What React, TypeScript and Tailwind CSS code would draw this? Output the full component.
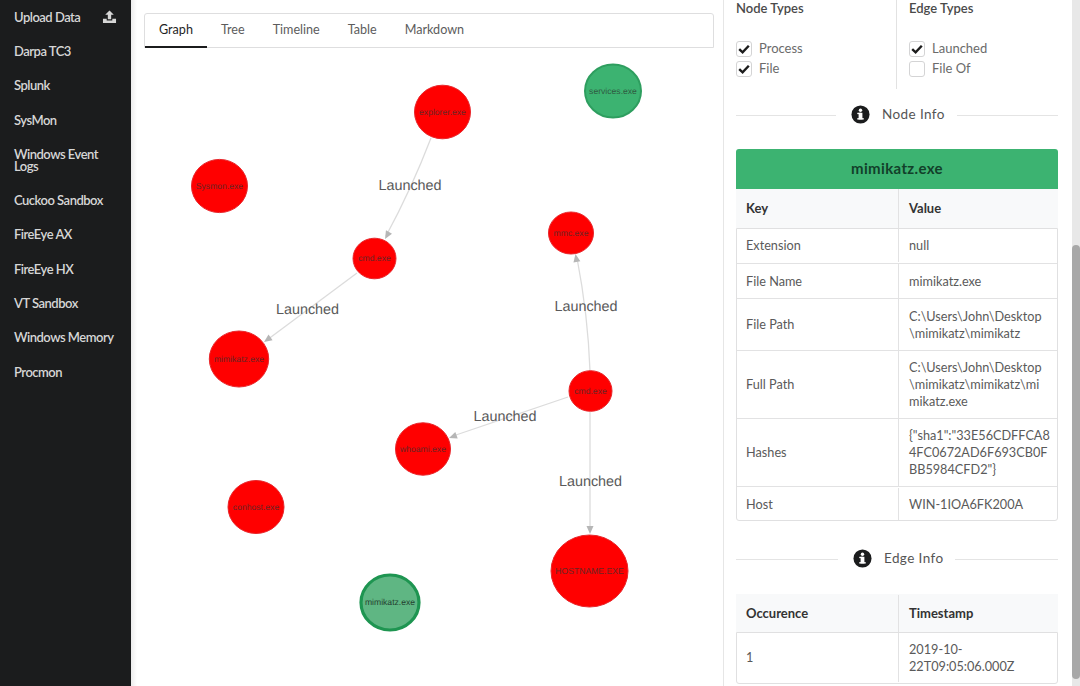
const nav = ["Upload Data", "Darpa TC3", "Splunk", "SysMon", "Windows Event Logs", "Cuckoo Sandbox", "FireEye AX", "FireEye HX", "VT Sandbox", "Windows Memory", "Procmon"];
const tabs = ["Graph", "Tree", "Timeline", "Table", "Markdown"];
const nodes = [
  { x: 442.5, y: 112, rx: 28, ry: 26.8, l: "explorer.exe" },
  { x: 219.5, y: 186, rx: 28, ry: 26.6, l: "Sysmon.exe" },
  { x: 374.5, y: 258.5, rx: 21.5, ry: 20.3, l: "cmd.exe" },
  { x: 571, y: 233, rx: 22.5, ry: 21, l: "mmc.exe" },
  { x: 239, y: 359, rx: 29.7, ry: 28, l: "mimikatz.exe" },
  { x: 590.5, y: 391, rx: 21.5, ry: 20.3, l: "cmd.exe" },
  { x: 423, y: 449, rx: 27.5, ry: 26.2, l: "whoami.exe" },
  { x: 256, y: 507, rx: 28, ry: 26.5, l: "conhost.exe" },
  { x: 589.5, y: 571, rx: 38.5, ry: 36, l: "HOSTNAME.EXE" },
];
const edges = [
  { d: "M431 138 Q411 190 386 236", a: [385, 239, -60], tx: 410, ty: 190 },
  { d: "M357 273 L267 340", a: [264, 342, -35], tx: 307.5, ty: 314 },
  { d: "M590 371 Q588 315 577 258", a: [575.5, 254, 80], tx: 586, ty: 311 },
  { d: "M568 397 L453 436", a: [449, 438, -20], tx: 505, ty: 421 },
  { d: "M590 412 L590 530", a: [590, 534, -90], tx: 590.5, ty: 486 },
];

function Check({ on, label }: { on: boolean; label: string }) {
  return (
    <div className="flex items-center h-5 text-[13px] text-[#6b6b6b]">
      <span className="w-[16px] h-[16px] rounded-[3px] border border-[#d4d4d5] flex items-center justify-center mr-[7px] bg-white">
        {on && (
          <svg viewBox="0 0 12 12" className="w-[12px] h-[12px]">
            <path d="M1.2 6.2 L4.6 9.4 L10.8 2.8" fill="none" stroke="#1c1c1c" strokeWidth="2.4" />
          </svg>
        )}
      </span>
      {label}
    </div>
  );
}

function Divider({ label, l }: { label: string; l: string }) {
  return (
    <div className="flex items-center h-6">
      <div className={`h-px bg-[#e4e4e4] mt-[3px] ${l}`} />
      <svg viewBox="0 0 20 20" className="w-[19px] h-[19px] ml-[15px] mr-[12px] shrink-0">
        <circle cx="10" cy="10" r="9.5" fill="#1b1c1d" />
        <rect x="8" y="8.2" width="4" height="7" fill="#fff" />
        <rect x="6.6" y="8.2" width="4" height="1.4" fill="#fff" />
        <rect x="6.6" y="13.8" width="6.8" height="1.5" fill="#fff" />
        <circle cx="10" cy="5.6" r="1.8" fill="#fff" />
      </svg>
      <span className="text-[13.5px] tracking-[0.4px] text-[#555] whitespace-nowrap">{label}</span>
      <div className="h-px bg-[#e4e4e4] flex-1 ml-[12px] mt-[3px]" />
    </div>
  );
}

function Row({ k, v, h, top = true }: { k: string; v: string[]; h: string; top?: boolean }) {
  return (
    <div className={`flex text-[12.7px] leading-[17px] text-[#5a5a5a] ${top ? "border-t border-[#e2e2e3]" : ""} ${h}`}>
      <div className="w-[162px] shrink-0 border-r border-[#e2e2e3] pl-[9px] flex items-center">{k}</div>
      <div className="pl-[10px] flex flex-col justify-center whitespace-nowrap">
        {v.map((t) => <span key={t}>{t}</span>)}
      </div>
    </div>
  );
}

function Head({ a, b, h }: { a: string; b: string; h: string }) {
  return (
    <div className={`flex bg-[#f8f9fa] text-[13px] font-bold text-[#333] ${h}`}>
      <div className="w-[163px] shrink-0 border-r border-[#e2e2e3] pl-[10px] flex items-center">{a}</div>
      <div className="pl-[10px] flex items-center">{b}</div>
    </div>
  );
}

export default function App() {
  return (
    <div className="flex h-[686px] w-[1080px] overflow-hidden bg-white font-['Lato','Liberation_Sans',sans-serif]">
      <aside className="w-[131px] shrink-0 bg-[#1b1c1d] text-[13px] text-[#d6d6d6] font-semibold leading-[12px] pl-[14px] tracking-[-0.5px]">
        {nav.map((n, i) => (
          <div key={n} className={`flex items-center justify-between pr-[14px] ${i === 4 ? "h-[46px]" : i === 0 ? "h-[34px]" : "h-[34.3px]"}`}>
            <span className={i === 4 ? "" : "whitespace-nowrap"}>{n}</span>
            {i === 0 && (
              <svg viewBox="0 0 16 15" className="w-[15px] h-[14px]">
                <path d="M8 0.5 L12.6 5.2 H9.8 V10 H6.2 V5.2 H3.4 Z M1 9.5 H5 V11.2 H11 V9.5 H15 V14 H1 Z" fill="#d6d6d6" />
              </svg>
            )}
          </div>
        ))}
      </aside>

      <main className="w-[592px] shrink-0 relative bg-white">
        <div className="absolute left-0 top-0 h-full w-[6px] bg-gradient-to-r from-[#ececec] to-white" />
        <div className="relative mt-[13px] ml-[13px] w-[570px] h-[35px] flex border border-[#dededf] rounded-t-[3px] text-[12.6px] text-[#5c5c5c]">
          {tabs.map((t, i) => (
            <div key={t} className={`px-[14px] flex items-center ${i === 0 ? "border-b-2 border-[#1b1c1d] text-[#1f1f1f] -mb-px" : ""}`}>{t}</div>
          ))}
        </div>
        <svg className="absolute left-0 top-0 pointer-events-none [text-rendering:geometricPrecision]" width="592" height="686" viewBox="131 0 592 686">
          {edges.map((e) => (
            <g key={e.d}>
              <path d={e.d} fill="none" stroke="#dcdcdc" strokeWidth="1.3" />
              <polygon points="0,0 8,-3.5 8,3.5" fill="#b6b6b6" transform={`translate(${e.a[0]} ${e.a[1]}) rotate(${e.a[2]})`} />
              <text x={e.tx} y={e.ty} textAnchor="middle" fontFamily="Liberation Sans" fontSize="14.4" fill="#5a5a5a">Launched</text>
            </g>
          ))}
          <ellipse cx="613" cy="91" rx="28" ry="26.5" fill="#3cb371" stroke="#2e9e5f" strokeWidth="2" />
          <text x="613" y="93.5" textAnchor="middle" fontFamily="Liberation Sans" fontSize="8.6" fill="#2f5b42">services.exe</text>
          <ellipse cx="390" cy="602.5" rx="29" ry="27.5" fill="#5fb683" stroke="#1e9551" strokeWidth="3.2" />
          <text x="390" y="605" textAnchor="middle" fontFamily="Liberation Sans" fontSize="8.6" fill="#243f2f">mimikatz.exe</text>
          {nodes.map((n) => (
            <g key={n.x}>
              <ellipse cx={n.x} cy={n.y} rx={n.rx} ry={n.ry} fill="#ff0000" stroke="#e8262b" strokeWidth="1" />
              <text x={n.x} y={n.y + 2.5} textAnchor="middle" fontFamily="Liberation Sans" fontSize="8.6" fill="#6b2424">{n.l}</text>
            </g>
          ))}
        </svg>
      </main>

      <section className="w-[349px] shrink-0 border-l border-[#e6e6e6] pl-[12px] text-[#444]">
        <div className="flex h-[89px]">
          <div className="w-[161px] border-r border-[#e2e2e2] pt-[1px]">
            <div className="text-[13px] font-semibold text-[#4a4a4a] leading-[15px] mb-[23px]">Node Types</div>
            <Check on label="Process" />
            <Check on label="File" />
          </div>
          <div className="pl-[12px] pt-[1px]">
            <div className="text-[13px] font-semibold text-[#4a4a4a] leading-[15px] mb-[23px]">Edge Types</div>
            <Check on label="Launched" />
            <Check on={false} label="File Of" />
          </div>
        </div>
        <div className="mt-[13px] w-[322px]"><Divider label="Node Info" l="w-[100px]" /></div>
        <div className="mt-[23px] w-[322px]">
          <div className="h-[40px] pb-[2px] bg-[#3cb371] rounded-t-[3px] flex items-center justify-center text-[15px] font-bold text-[#12402a] tracking-[0.35px]">mimikatz.exe</div>
          <Head a="Key" b="Value" h="h-[39px]" />
          <div className="border border-[#e0e0e1] rounded-b-[3px]">
            <Row top={false} k="Extension" v={["null"]} h="h-[34px] pb-[1px]" />
            <Row k="File Name" v={["mimikatz.exe"]} h="h-[35px]" />
            <Row k="File Path" v={["C:\\Users\\John\\Desktop", "\\mimikatz\\mimikatz"]} h="h-[52px]" />
            <Row k="Full Path" v={["C:\\Users\\John\\Desktop", "\\mimikatz\\mimikatz\\mi", "mikatz.exe"]} h="h-[68px]" />
            <Row k="Hashes" v={['{"sha1":"33E56CDFFCA8', "4FC0672AD6F693CB0F", 'BB5984CFD2"}']} h="h-[68px]" />
            <Row k="Host" v={["WIN-1IOA6FK200A"]} h="h-[34px] pt-[1px]" />
          </div>
        </div>
        <div className="mt-[25px] w-[322px]"><Divider label="Edge Info" l="w-[102px]" /></div>
        <div className="mt-[24px] w-[322px]">
          <Head a="Occurence" b="Timestamp" h="h-[38px] pt-[1px]" />
          <div className="border border-[#e0e0e1] rounded-b-[3px]">
            <Row top={false} k="1" v={["2019-10-", "22T09:05:06.000Z"]} h="h-[50px] pb-[1px]" />
          </div>
        </div>
      </section>

      <div className="w-[8px] shrink-0 bg-[#e8e8e8] relative">
        <div className="absolute left-0 top-[245px] w-[8px] h-[434px] rounded-[4px] bg-[#a8a8a8]" />
      </div>
    </div>
  );
}
